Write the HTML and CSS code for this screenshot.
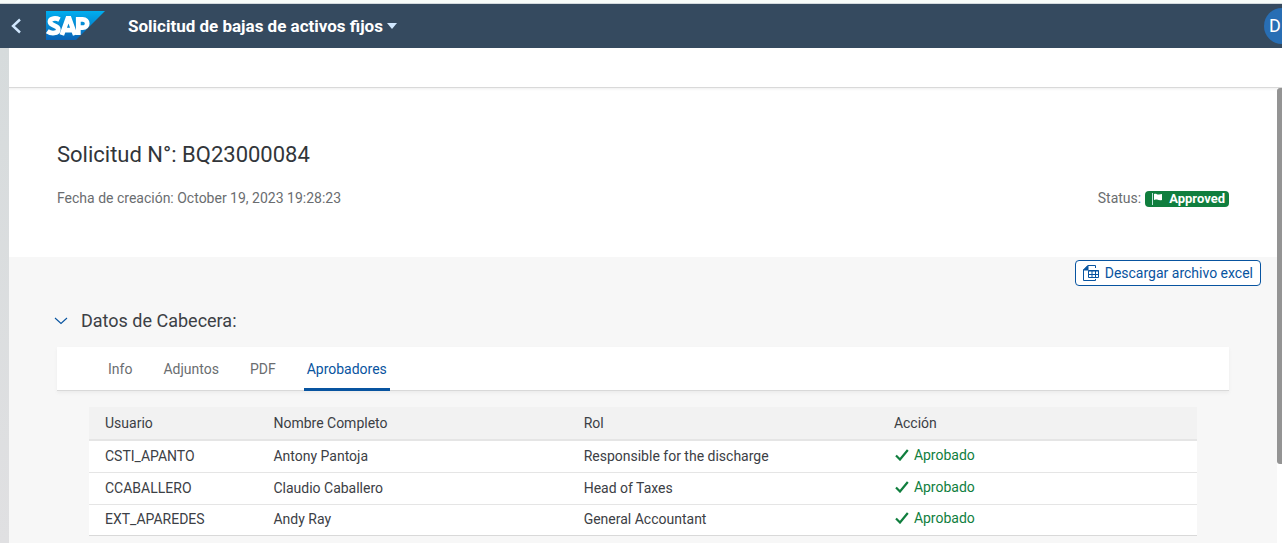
FILE: index.html
```html
<!DOCTYPE html>
<html lang="es">
<head>
<meta charset="utf-8">
<title>Solicitud de bajas de activos fijos</title>
<link rel="stylesheet" href="styles.css">
</head>
<body>
<div class="app">
  <header class="shell">
    <button class="back" type="button" aria-label="Volver">
      <svg width="12" height="16" viewBox="0 0 12 16"><path d="M10 1.500 3 8l7 6.500" fill="none" stroke="#d1e8ff" stroke-width="2.400"/></svg>
    </button>
    <a class="logo" href="#" aria-label="SAP">
      <svg width="60" height="30" viewBox="0 0 60 30">
        <defs><linearGradient id="sap" x1="0" y1="0" x2="0" y2="1"><stop offset="0" stop-color="#00aeef"/><stop offset="1" stop-color="#0a62b5"/></linearGradient></defs>
        <path d="M0 0h59L30 29H0z" fill="url(#sap)"/>
        <g fill="none" stroke="#fff" stroke-width="4.800">
          <path d="M13.500 8.600C10 6.700 4 7 4 10.800c0 4.400 8.300 2.900 8.300 7.600 0 4.300-7 4.600-11 1.800"/>
          <path d="M15.800 24 21.800 7.500h1.400L29.200 24M18 19.200h9"/>
          <path d="M32.300 24V8.300h4.400c6 0 6 8.300 0 8.300h-4"/>
        </g>
      </svg>
    </a>
    <button class="app-title" type="button">Solicitud de bajas de activos fijos
      <svg width="10" height="6" viewBox="0 0 10 6"><path d="M0 0h10L5 6z" fill="#d1e8ff"/></svg>
    </button>
    <button class="avatar" type="button" aria-label="Perfil">D</button>
  </header>
  <main class="page">
    <div class="page-bar"></div>
    <div class="scroll-area">
      <div class="content">
        <section class="summary">
          <h1>Solicitud N°: BQ23000084</h1>
          <div class="facts">
            <span>Fecha de creación: October 19, 2023 19:28:23</span>
            <span class="status">Status:
              <strong class="badge"><svg width="12" height="12" viewBox="0 0 12 12"><path d="M1.500 0v12" stroke="#bfe8df"/><path d="M3 1c2-.8 3 .7 5 .5l3-.6v6c-2 .8-3.500 0-5-.3S4 6.500 3 7z" fill="#fff"/></svg>Approved</strong>
            </span>
          </div>
        </section>
        <div class="actions">
          <button class="download" type="button">
            <svg width="17" height="17" viewBox="0 0 17 17" fill="none" stroke="#0854a0"><path d="M12.500 3V.500H5L.500 5v10.500h12v-1.500"/><path d="M.500 5 5 .500V5z" fill="#0854a0"/><path d="M5.500 5.500h10v7h-10zM5.500 9.500h10M9 5.500v7M12.500 5.500v7"/><path d="M5 6h11"/></svg>
            Descargar archivo excel
          </button>
        </div>
        <section class="panel">
          <h2><button class="collapse" type="button" aria-label="Contraer">
            <svg width="14" height="8" viewBox="0 0 14 8"><path d="M1 1l6 5.500L13 1" fill="none" stroke="#0854a0" stroke-width="1.100"/></svg>
          </button>Datos de Cabecera:</h2>
          <nav class="tabs">
            <a href="#">Info</a>
            <a href="#">Adjuntos</a>
            <a href="#">PDF</a>
            <a href="#" class="selected" aria-current="page">Aprobadores</a>
          </nav>
          <div class="table-wrap">
            <table>
              <colgroup><col class="c-user"><col class="c-name"><col class="c-role"><col></colgroup>
              <thead><tr><th>Usuario</th><th>Nombre Completo</th><th>Rol</th><th>Acción</th></tr></thead>
              <tbody>
                <tr><td>CSTI_APANTO</td><td>Antony Pantoja</td><td>Responsible for the discharge</td><td><span class="ok"><svg width="14" height="12" viewBox="0 0 14 12"><path d="M1 6.500 5 10.500 12.800 1" fill="none" stroke="#107e3e" stroke-width="2.200"/></svg>Aprobado</span></td></tr>
                <tr><td>CCABALLERO</td><td>Claudio Caballero</td><td>Head of Taxes</td><td><span class="ok"><svg width="14" height="12" viewBox="0 0 14 12"><path d="M1 6.500 5 10.500 12.800 1" fill="none" stroke="#107e3e" stroke-width="2.200"/></svg>Aprobado</span></td></tr>
                <tr><td>EXT_APAREDES</td><td>Andy Ray</td><td>General Accountant</td><td><span class="ok"><svg width="14" height="12" viewBox="0 0 14 12"><path d="M1 6.500 5 10.500 12.800 1" fill="none" stroke="#107e3e" stroke-width="2.200"/></svg>Aprobado</span></td></tr>
              </tbody>
            </table>
          </div>
        </section>
      </div>
      <div class="rail"><div class="thumb"></div></div>
    </div>
  </main>
</div>
</body>
</html>
```
FILE: styles.css
```css
* { box-sizing: border-box; }
body { margin: 0; font: 14px/20px Roboto, "Noto Sans", sans-serif; color: #3c4045; background: #fff; }
button { font: inherit; border: 0; background: none; padding: 0; cursor: pointer; }
svg { display: block; flex: none; }
a { text-decoration: none; color: inherit; }

.app { display: flex; flex-direction: column; min-height: 100vh; border-top: 3px solid #f7fcf9; overflow: hidden; }
.shell { display: flex; align-items: center; height: 45px; background: #354a5f; border-top: 1px solid #d3dadd; padding-left: 10px; }
.logo { margin: 0 22px 0 24px; }
.app-title { display: flex; align-items: center; gap: 4px; color: #fff; font-size: 17px; font-weight: 700; }
.avatar { width: 36px; height: 36px; margin: 0 -18px 0 auto; border-radius: 50%; background: #286eb4; color: #fff; font-size: 18px; text-align: left; padding-left: 5px; }

.page { flex: 1; display: flex; flex-direction: column; padding-left: 9px; background: linear-gradient(#d6dbdc, #e0e0e2); }
.page-bar { height: 40px; background: #fff; border-bottom: 1px solid #d9d9d9; }
.scroll-area { flex: 1; display: flex; }
.content { flex: 1; background: #f7f7f7; }
.rail { width: 5px; background: #fff; }
.thumb { height: 376px; background: #949494; border-radius: 3px 0 0 3px; }

.summary { background: #fff; padding: 52px 48px 48px; box-shadow: inset 0 3px 3px -2px #eee; }
h1 { margin: 0 0 18px; font-size: 22px; line-height: 30px; font-weight: 400; color: #32363a; }
.facts { display: flex; justify-content: space-between; align-items: center; color: #6a6d70; line-height: 21px; }
.status { display: flex; align-items: center; gap: 4px; }
.badge { display: flex; align-items: center; gap: 6px; height: 16px; padding: 0 4px 0 6px; border-radius: 4px; background: #107e3e; color: #fff; font-size: 13px; line-height: 16px; }

.actions { display: flex; justify-content: flex-end; padding: 3px 16px 0; }
.download { display: flex; align-items: center; gap: 5px; height: 26px; padding: 0 7px; border: 1px solid #0854a0; border-radius: 4px; background: #fff; color: #0854a0; }

.panel { padding: 20px 48px 0; }
h2 { display: flex; align-items: center; gap: 13px; margin: 0 0 11px -3px; font-size: 18px; line-height: 30px; font-weight: 400; }
.tabs { display: flex; gap: 25px; height: 44px; padding-left: 48px; background: #fff; border-bottom: 1px solid #d9d9d9; box-shadow: 0 2px 3px #ececec; line-height: 44px; color: #6a6d70; }
.tabs a { padding: 0 3px; height: 44px; }
.tabs .selected { color: #0854a0; border-bottom: 3px solid #0854a0; border-radius: 2px 2px 0 0; }
.table-wrap { padding: 16px 32px 0; }
table { width: 100%; table-layout: fixed; border-collapse: separate; border-spacing: 0; }
.c-user { width: 15.200%; }
.c-name { width: 28%; }
.c-role { width: 28%; }
th, td { text-align: left; font-weight: 400; padding: 0 16px; }
th { height: 34px; background: #f2f2f2; border-bottom: 2px solid #e5e5e5; }
td { height: 32px; padding-bottom: 2px; background: #fff; border-bottom: 1px solid #e5e5e5; }
tbody tr:last-child td { height: 31px; border-color: #d9d9d9; }
.ok { display: flex; align-items: center; gap: 5px; color: #107e3e; padding: 0 0 2px 1px; }
```
